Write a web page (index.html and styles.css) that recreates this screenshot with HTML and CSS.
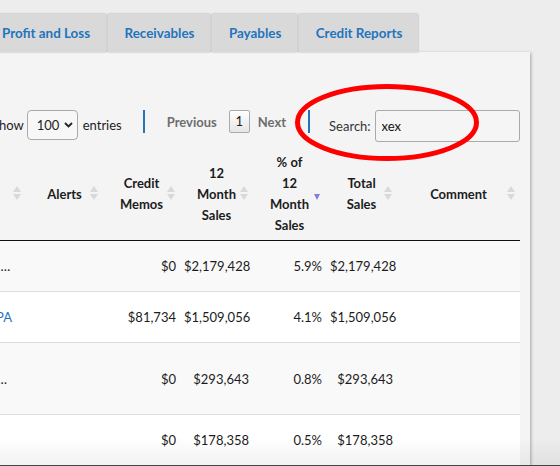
FILE: index.html
```html
<!DOCTYPE html>
<html lang="en">
<head>
    <meta charset="UTF-8">
    <meta name="viewport" content="width=device-width, initial-scale=1.0">
    <title>Credit Reports</title>
    <link rel="stylesheet" href="styles.css">
</head>
<body>
    <div class="page">
        <div class="tabs">
            <a class="tab" href="#">Profit and Loss</a>
            <a class="tab" href="#">Receivables</a>
            <a class="tab" href="#">Payables</a>
            <a class="tab" href="#">Credit Reports</a>
        </div>

        <div class="panel">
            <div class="controls">
                <label class="length">
                    Show
                    <span class="select-wrap">
                        <select><option>100</option><option>50</option><option>25</option></select>
                        <svg class="chevron" width="9" height="6" viewBox="0 0 9 6"><path d="M1 1l3.5 3.5L8 1" fill="none" stroke="#222" stroke-width="1.8"/></svg>
                    </span>
                    entries
                </label>
                <div class="pager">
                    <span class="sep"></span>
                    <a class="pg-link" href="#">Previous</a>
                    <span class="pg-num">1</span>
                    <a class="pg-link" href="#">Next</a>
                    <span class="sep"></span>
                </div>
                <label class="search">
                    Search:
                    <input type="text" value="xex">
                </label>
            </div>

            <table class="report">
                <colgroup>
                    <col class="w-name">
                    <col class="w-alerts">
                    <col class="w-memos">
                    <col class="w-sales">
                    <col class="w-pct">
                    <col class="w-total">
                    <col class="w-comment">
                </colgroup>
                <thead>
                    <tr>
                        <th class="sorting">Customer</th>
                        <th class="sorting">Alerts</th>
                        <th class="sorting">Credit Memos</th>
                        <th class="sorting">12 Month Sales</th>
                        <th class="sorting-desc">% of 12 Month Sales</th>
                        <th class="sorting">Total Sales</th>
                        <th class="sorting">Comment</th>
                    </tr>
                </thead>
                <tbody>
                    <tr>
                        <td class="name">Xex Industrial Distributors Incorporated</td>
                        <td></td>
                        <td class="num">$0</td>
                        <td class="num">$2,179,428</td>
                        <td class="num">5.9%</td>
                        <td class="num">$2,179,428</td>
                        <td></td>
                    </tr>
                    <tr>
                        <td class="name"><a href="#">Xexon Supply of PA</a></td>
                        <td></td>
                        <td class="num">$81,734</td>
                        <td class="num">$1,509,056</td>
                        <td class="num">4.1%</td>
                        <td class="num">$1,509,056</td>
                        <td></td>
                    </tr>
                    <tr class="tall">
                        <td class="name">Xex Precision Manufacturing Company</td>
                        <td></td>
                        <td class="num">$0</td>
                        <td class="num">$293,643</td>
                        <td class="num">0.8%</td>
                        <td class="num">$293,643</td>
                        <td></td>
                    </tr>
                    <tr>
                        <td class="name"></td>
                        <td></td>
                        <td class="num">$0</td>
                        <td class="num">$178,358</td>
                        <td class="num">0.5%</td>
                        <td class="num">$178,358</td>
                        <td></td>
                    </tr>
                </tbody>
            </table>
        </div>
    </div>

    <!-- red annotation round the search box -->
    <svg class="markup" width="560" height="466" viewBox="0 0 560 466">
        <ellipse cx="387" cy="122.5" rx="89.5" ry="36" fill="none" stroke="#f00" stroke-width="5"/>
    </svg>
</body>
</html>
```

FILE: styles.css
```css
html, body {
    margin: 0;
    height: 100%;
}
body {
    background: #ededed;
    font-family: Lato, "Open Sans", sans-serif;
    font-size: 13px;
    color: #1c1c1c;
    overflow: hidden;
    position: relative;
}
body::after {
    content: "";
    position: absolute;
    left: 0;
    right: 0;
    bottom: 0;
    height: 28px;
    background: linear-gradient(rgba(0,0,0,0), rgba(0,0,0,0.05));
    border-bottom: 1px solid #444;
}
.page {
    margin-left: -140px;
    width: 670px;
}

/* tabs */
.tabs {
    display: flex;
    gap: 1.5px;
    padding: 14px 0 0 125px;
}
.tab {
    display: block;
    height: 38px;
    line-height: 38px;
    padding: 0 16px 0 17px;
    background: #d9d9d9;
    box-shadow: 0 0 2px rgba(0,0,0,0.3);
    color: #1f74bd;
    font-size: 13.4px;
    font-weight: bold;
    text-decoration: none;
}

/* panel */
.panel {
    background: #f4f4f4;
    box-shadow: 1px 1px 3px rgba(0,0,0,0.3);
    padding: 58px 10px 0 10px;
    height: 356px;
    overflow: hidden;
}
.controls {
    display: flex;
    align-items: flex-start;
    padding-left: 122px;
    height: 32px;
}
.length {
    display: flex;
    align-items: center;
    height: 30px;
}
.select-wrap {
    position: relative;
    margin: 0 5px 0 3px;
}
.select-wrap select {
    appearance: none;
    -webkit-appearance: none;
    width: 51px;
    height: 30px;
    border: 1px solid #aaa;
    border-radius: 4px;
    background: #f7f7f7;
    padding: 0 0 0 9px;
    font-family: inherit;
    font-size: 13px;
    color: #222;
}
.chevron {
    position: absolute;
    right: 5px;
    top: 12px;
}
.pager {
    display: flex;
    align-items: center;
    height: 23px;
    margin-left: 21px;
}
.sep {
    width: 2px;
    height: 23px;
    background: #1f74bd;
}
.pg-link {
    color: #6e6e6e;
    font-weight: bold;
    text-decoration: none;
    margin-left: 22px;
}
.pg-num {
    width: 19px;
    height: 21px;
    line-height: 21px;
    text-align: center;
    border: 1px solid #aaa;
    border-radius: 2px;
    background: linear-gradient(#fff, #e6e6e6);
    margin: 0 8px 0 12px;
}
.pg-num + .pg-link {
    margin-left: 0;
}
.pager .sep:last-child {
    margin-left: 22px;
}
.search {
    display: flex;
    align-items: center;
    height: 32px;
    margin-left: 19px;
    color: #333;
}
.search input {
    width: 145px;
    height: 32px;
    box-sizing: border-box;
    margin-left: 4px;
    padding: 0 6px;
    border: 1px solid #aaa;
    border-radius: 3px;
    background: #f5f5f5;
    font-family: inherit;
    font-size: 13px;
    color: #111;
}

/* table */
.report {
    width: 650px;
    table-layout: fixed;
    border-collapse: collapse;
    margin-top: 4px;
}
.w-name { width: 156px; }
.w-alerts { width: 77px; }
.w-memos { width: 77px; }
.w-sales { width: 73px; }
.w-pct { width: 73px; }
.w-total { width: 71px; }
.w-comment { width: 123px; }

.report th {
    position: relative;
    padding: 6px 16px 4px;
    line-height: 21px;
    font-weight: bold;
    text-align: center;
    vertical-align: middle;
    border-bottom: 1px solid #111;
}
.sorting::before,
.sorting::after,
.sorting-desc::after {
    content: "";
    position: absolute;
    right: 5px;
    width: 0;
    height: 0;
    border-left: 4px solid transparent;
    border-right: 4px solid transparent;
}
.sorting::before {
    top: calc(50% - 7px);
    border-bottom: 6px solid #d9d9d9;
}
.sorting::after {
    top: calc(50% + 1px);
    border-top: 6px solid #d9d9d9;
}
.sorting-desc::after {
    top: calc(50% + 1px);
    right: 6px;
    border-left-width: 3.5px;
    border-right-width: 3.5px;
    border-top: 6px solid #7f7fdc;
}
.report td {
    padding: 15px 4px;
    line-height: 20px;
    border-bottom: 1px solid #ddd;
}
.report tbody tr:nth-child(odd) {
    background: #f9f9f9;
}
.report tbody tr:nth-child(even) {
    background: #fff;
}
.report tr.tall td {
    height: 41px;
}
.report td.name {
    text-align: right;
    padding-right: 14px;
    white-space: nowrap;
    overflow: hidden;
    text-overflow: ellipsis;
}
.report td.num {
    text-align: right;
}
.report a {
    color: #1f74bd;
    text-decoration: none;
}

.markup {
    position: absolute;
    left: 0;
    top: 0;
    pointer-events: none;
}
```
